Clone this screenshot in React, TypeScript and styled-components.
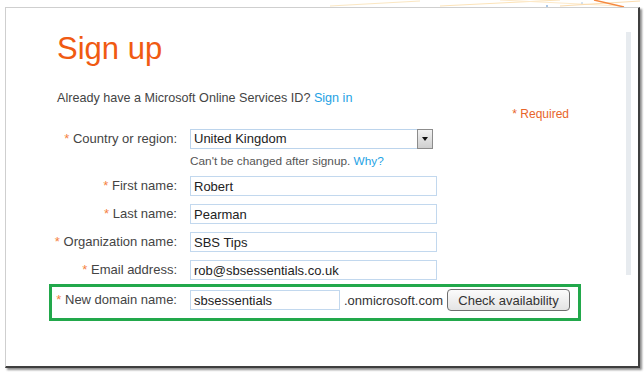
import styled, { createGlobalStyle } from "styled-components";

const GlobalStyle = createGlobalStyle`
  html, body {
    margin: 0;
    padding: 0;
    background: #fff;
  }
  body {
    font-family: "Liberation Sans", Arial, sans-serif;
  }
`;

const fields = [
  { label: "First name:", value: "Robert" },
  { label: "Last name:", value: "Pearman" },
  { label: "Organization name:", value: "SBS Tips" },
  { label: "Email address:", value: "rob@sbsessentials.co.uk" },
];

export default function App() {
  return (
    <Page>
      <GlobalStyle />
      <TopStrip>
        <svg width="644" height="7" viewBox="0 0 644 7">
          <path d="M330 6 L420 1" stroke="#fbe7c2" strokeWidth="1" fill="none" />
          <path d="M440 6 L560 0" stroke="#fce3b8" strokeWidth="1" fill="none" />
          <path d="M500 0 L620 6" stroke="#fde9c8" strokeWidth="1" fill="none" />
          <path d="M560 6 L640 1" stroke="#fbdcae" strokeWidth="1" fill="none" />
          <path d="M594 0 L624 7" stroke="#f5883f" strokeWidth="1.4" fill="none" />
          <circle cx="547" cy="6" r="1" fill="#8fb4dd" />
          <circle cx="582" cy="3" r="0.8" fill="#9fc0e2" />
        </svg>
      </TopStrip>
      <Frame>
        <Content>
          <Title>Sign up</Title>
          <Intro>
            Already have a Microsoft Online Services ID? <Link>Sign in</Link>
          </Intro>
          <Required>* Required</Required>
          <Form>
            <Row $top>
              <Label>
                <Star>*</Star> Country or region:
              </Label>
              <FieldStack>
                <SelectBox>
                  <SelectValue>United Kingdom</SelectValue>
                  <DropButton>
                    <Arrow />
                  </DropButton>
                </SelectBox>
                <Hint>
                  Can't be changed after signup. <Link>Why?</Link>
                </Hint>
              </FieldStack>
            </Row>
            {fields.map((f) => (
              <Row key={f.label}>
                <Label>
                  <Star>*</Star> {f.label}
                </Label>
                <TextBox readOnly value={f.value} $width={247} />
              </Row>
            ))}
            <Row $highlight>
              <Label>
                <Star>*</Star> New domain name:
              </Label>
              <TextBox readOnly value="sbsessentials" $width={150} />
              <Suffix>.onmicrosoft.com</Suffix>
              <CheckButton>Check availability</CheckButton>
            </Row>
          </Form>
        </Content>
        <ScrollTrack />
      </Frame>
    </Page>
  );
}

const Page = styled.div`
  width: 644px;
  height: 372px;
  overflow: hidden;
  display: flex;
  flex-direction: column;
`;

const TopStrip = styled.div`
  height: 7px;
  line-height: 0;
  svg {
    display: block;
  }
`;

const Frame = styled.div`
  margin-left: 5px;
  width: 635px;
  height: 361px;
  box-sizing: border-box;
  border-top: 1px solid #cfcfcf;
  border-left: 1px solid #cfcfcf;
  border-right: 2px solid #3f3f3f;
  border-bottom: 2px solid #3f3f3f;
  box-shadow: 2px 2px 2px rgba(0, 0, 0, 0.45);
  display: flex;
  background: #fff;
`;

const Content = styled.div`
  flex: 1;
  padding: 23px 0 0 43px;
`;

const ScrollTrack = styled.div`
  width: 5px;
  height: 243px;
  margin-top: 24px;
  margin-right: 7px;
  background: #e7ebef;
`;

const Title = styled.h1`
  margin: 0 0 0 8px;
  font-size: 31px;
  line-height: 36px;
  font-weight: normal;
  color: #f05a12;
`;

const Intro = styled.div`
  margin: 23px 0 0 8px;
  font-size: 12.6px;
  line-height: 16px;
  color: #444;
`;

const Link = styled.span`
  color: #1ea2e4;
`;

const Required = styled.div`
  width: 532px;
  box-sizing: border-box;
  padding-right: 12px;
  margin-top: 1px;
  text-align: right;
  font-size: 12px;
  line-height: 14px;
  color: #e8652a;
`;

const Form = styled.div`
  margin-top: 4px;
  display: flex;
  flex-direction: column;
`;

const Row = styled.div<{ $highlight?: boolean; $top?: boolean }>`
  width: 532px;
  box-sizing: border-box;
  display: flex;
  align-items: ${(p) => (p.$top ? "flex-start" : "center")};
  border: 3px solid ${(p) => (p.$highlight ? "#22a84b" : "transparent")};
  padding: ${(p) => (p.$highlight ? "2px 0 7px" : "1px 0")};
`;

const Label = styled.div`
  width: 125px;
  flex-shrink: 0;
  margin-right: 13px;
  text-align: right;
  font-size: 13px;
  line-height: 20px;
  color: #444;
  white-space: nowrap;
`;

const Star = styled.span`
  color: #f5823f;
`;

const FieldStack = styled.div`
  display: flex;
  flex-direction: column;
`;

const SelectBox = styled.div`
  width: 243px;
  height: 20px;
  display: flex;
`;

const SelectValue = styled.div`
  flex: 1;
  box-sizing: border-box;
  border: 1px solid #bcd4ec;
  border-right: none;
  padding-left: 3px;
  font-size: 13px;
  line-height: 18px;
  color: #222;
`;

const DropButton = styled.div`
  width: 16px;
  height: 20px;
  box-sizing: border-box;
  border: 1px solid #8c8c8c;
  background: linear-gradient(#f2f2f2, #cfcfcf);
  display: flex;
  align-items: center;
  justify-content: center;
`;

const Arrow = styled.div`
  width: 0;
  height: 0;
  border-left: 3.5px solid transparent;
  border-right: 3.5px solid transparent;
  border-top: 4px solid #111;
  margin-top: -1px;
`;

const Hint = styled.div`
  margin-top: 5px;
  font-size: 11.8px;
  line-height: 14px;
  color: #555;
`;

const TextBox = styled.input<{ $width: number }>`
  width: ${(p) => p.$width}px;
  height: 20px;
  box-sizing: border-box;
  border: 1px solid #c2d8ee;
  padding: 0 3px;
  margin: 0;
  font-family: "Liberation Sans", Arial, sans-serif;
  font-size: 13px;
  color: #222;
  background: #fff;
  outline: none;
`;

const Suffix = styled.span`
  margin-left: 4px;
  font-size: 13px;
  color: #333;
`;

const CheckButton = styled.button`
  margin-left: 4px;
  width: 123px;
  height: 22px;
  padding: 0;
  box-sizing: border-box;
  border: 1px solid #6e6e6e;
  border-radius: 4px;
  background: linear-gradient(#fbfbfb, #e4e4e4);
  font-family: "Liberation Sans", Arial, sans-serif;
  font-size: 13px;
  color: #333;
`;
